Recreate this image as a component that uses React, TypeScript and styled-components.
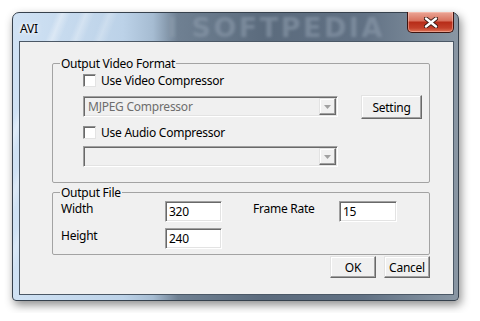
import React from "react";
import styled, { createGlobalStyle } from "styled-components";

const GlobalStyle = createGlobalStyle`
  html, body {
    margin: 0;
    background: #ffffff;
  }
  body {
    font-family: "Noto Sans", "DejaVu Sans", sans-serif;
    font-size: 12px;
    letter-spacing: -0.25px;
    color: #000000;
  }
`;

const Page = styled.div`
  padding: 12px;
`;

const Window = styled.div`
  width: 447px;
  height: 289px;
  box-sizing: border-box;
  display: flex;
  flex-direction: column;
  padding: 0 4px 5px 6px;
  border: 1px solid #36414d;
  border-radius: 7px 7px 4px 4px;
  box-shadow: 2px 4px 10px rgba(0, 0, 0, 0.45);
  background:
    linear-gradient(
        112deg,
        transparent 0 40px,
        rgba(255, 255, 255, 0.35) 46px,
        transparent 54px,
        transparent 62px,
        rgba(255, 255, 255, 0.28) 68px,
        transparent 76px,
        transparent 84px,
        rgba(255, 255, 255, 0.22) 90px,
        transparent 98px
      )
      no-repeat,
    linear-gradient(
      90deg,
      #d0e2f4 0px,
      #bcd2e8 110px,
      #a6bcd2 140px,
      #6f8092 165px,
      #5b6b7d 250px,
      #617184 350px,
      #7f8e9d 420px,
      #8a97a4 447px
    );
`;

const TitleBar = styled.div`
  position: relative;
  height: 28px;
  display: flex;
  align-items: flex-start;
  justify-content: space-between;
`;

const Title = styled.span`
  margin: 8px 0 0 1px;
  line-height: 15px;
  text-shadow: 0 0 5px #ffffff, 0 0 3px #ffffff;
`;

const Watermark = styled.span`
  position: absolute;
  left: 148px;
  top: -1px;
  font-family: "DejaVu Sans", sans-serif;
  font-weight: bold;
  font-size: 27px;
  letter-spacing: 2.5px;
  color: rgba(140, 155, 172, 0.6);
  filter: blur(1.4px);
`;

const CloseButton = styled.div`
  width: 47px;
  height: 21px;
  margin-top: -1px;
  box-sizing: border-box;
  display: flex;
  align-items: center;
  justify-content: center;
  border: 1px solid #3d1410;
  border-top: none;
  border-radius: 0 0 5px 5px;
  background: linear-gradient(#eba697 0%, #d8705c 45%, #b72c18 50%, #c3402a 80%, #de7458 100%);
  box-shadow: inset 0 0 0 1px rgba(255, 210, 200, 0.45);
`;

const Client = styled.div`
  flex: 1;
  display: flex;
  flex-direction: column;
  padding: 0 23px 0 32px;
  border: 1px solid #4b5866;
  background: #f0f0f0;
`;

const Group = styled.fieldset<{ $top: number; $bottom: number }>`
  margin: ${(p) => p.$top}px 0 0 0;
  padding: 0 0 ${(p) => p.$bottom}px 7px;
  border: 1px solid #a3a3a3;
  border-radius: 2px;
  min-inline-size: 0;
`;

const Legend = styled.legend`
  padding: 0 1px;
  line-height: 15px;
`;

const VideoBody = styled.div`
  margin-left: 23px;
  display: flex;
  flex-direction: column;
`;

const CheckRow = styled.label<{ $top: number }>`
  margin-top: ${(p) => p.$top}px;
  height: 13px;
  display: flex;
  align-items: center;
  gap: 5px;
  line-height: 15px;
`;

const CheckBox = styled.span`
  width: 13px;
  height: 13px;
  box-sizing: border-box;
  background: #ffffff;
  border: 1px solid;
  border-color: #8e8f8f #e3e3e3 #e3e3e3 #8e8f8f;
  box-shadow: inset 1px 1px 0 #696969;
`;

const ComboRow = styled.div<{ $top: number }>`
  margin-top: ${(p) => p.$top}px;
  height: 21px;
  display: flex;
  align-items: flex-start;
  gap: 23px;
`;

const Combo = styled.div`
  width: 255px;
  height: 21px;
  box-sizing: border-box;
  display: flex;
  align-items: center;
  justify-content: space-between;
  padding: 1px;
  border: 1px solid;
  border-color: #a0a0a0 #ffffff #ffffff #a0a0a0;
  box-shadow: inset 1px 1px 0 #696969, inset -1px -1px 0 #e3e3e3;
  background: #f0f0f0;
  color: #6d6d6d;
`;

const ComboText = styled.span`
  padding-left: 3px;
  line-height: 15px;
`;

const DropButton = styled.span`
  width: 17px;
  height: 17px;
  box-sizing: border-box;
  display: flex;
  align-items: center;
  justify-content: center;
  border: 1px solid;
  border-color: #e3e3e3 #696969 #696969 #e3e3e3;
  box-shadow: inset -1px -1px 0 #a0a0a0, inset 1px 1px 0 #ffffff;
  background: #f0f0f0;
`;

const Button = styled.div<{ $w: number; $h: number }>`
  width: ${(p) => p.$w}px;
  height: ${(p) => p.$h}px;
  flex-shrink: 0;
  box-sizing: border-box;
  display: flex;
  align-items: center;
  justify-content: center;
  border: 1px solid;
  border-color: #e3e3e3 #696969 #696969 #e3e3e3;
  box-shadow: inset -1px -1px 0 #a0a0a0, inset 1px 1px 0 #ffffff;
  background: #f0f0f0;
  line-height: 15px;
`;

const SettingButton = styled(Button)`
  margin-top: -1px;
`;

const FileGrid = styled.div`
  margin: 1px 0 0 1px;
  display: grid;
  grid-template-columns: 104px 57px 31px 86px 58px;
  grid-auto-rows: 21px;
  row-gap: 6px;
  align-items: start;
`;

const FieldLabel = styled.span<{ $col: number }>`
  grid-column: ${(p) => p.$col};
  line-height: 15px;
`;

const TextBox = styled.div<{ $col: number }>`
  grid-column: ${(p) => p.$col};
  height: 21px;
  box-sizing: border-box;
  display: flex;
  align-items: center;
  padding-left: 3px;
  border: 1px solid;
  border-color: #a0a0a0 #ffffff #ffffff #a0a0a0;
  box-shadow: inset 1px 1px 0 #696969, inset -1px -1px 0 #e3e3e3;
  background: #ffffff;
  line-height: 15px;
`;

const ButtonRow = styled.div`
  margin-top: 1px;
  display: flex;
  justify-content: flex-end;
  gap: 8px;
`;

function CloseGlyph() {
  return (
    <svg width="14" height="11" viewBox="0 0 14 11">
      <path
        d="M2 1.5 L12 9.5 M12 1.5 L2 9.5"
        stroke="#3a1a14"
        strokeWidth="4.2"
        strokeLinecap="round"
      />
      <path
        d="M2 1.5 L12 9.5 M12 1.5 L2 9.5"
        stroke="#ffffff"
        strokeWidth="2.4"
        strokeLinecap="round"
      />
    </svg>
  );
}

function Arrow() {
  return (
    <svg width="7" height="4" viewBox="0 0 7 4">
      <path d="M0 0 H7 L3.5 4 Z" fill="#a0a0a0" />
    </svg>
  );
}

export default function App() {
  return (
    <Page>
      <GlobalStyle />
      <Window>
        <TitleBar>
          <Title>AVI</Title>
          <Watermark>I SOFTPEDIA</Watermark>
          <CloseButton>
            <CloseGlyph />
          </CloseButton>
        </TitleBar>
        <Client>
          <Group $top={14} $bottom={15}>
            <Legend>Output Video Format</Legend>
            <VideoBody>
              <CheckRow $top={3}>
                <CheckBox />
                Use Video Compressor
              </CheckRow>
              <ComboRow $top={9}>
                <Combo>
                  <ComboText>MJPEG Compressor</ComboText>
                  <DropButton>
                    <Arrow />
                  </DropButton>
                </Combo>
                <SettingButton $w={61} $h={24}>
                  Setting
                </SettingButton>
              </ComboRow>
              <CheckRow $top={9}>
                <CheckBox />
                Use Audio Compressor
              </CheckRow>
              <ComboRow $top={7}>
                <Combo>
                  <ComboText />
                  <DropButton>
                    <Arrow />
                  </DropButton>
                </Combo>
              </ComboRow>
            </VideoBody>
          </Group>
          <Group $top={2} $bottom={5}>
            <Legend>Output File</Legend>
            <FileGrid>
              <FieldLabel $col={1}>Width</FieldLabel>
              <TextBox $col={2}>320</TextBox>
              <FieldLabel $col={4}>Frame Rate</FieldLabel>
              <TextBox $col={5}>15</TextBox>
              <FieldLabel $col={1}>Height</FieldLabel>
              <TextBox $col={2}>240</TextBox>
            </FileGrid>
          </Group>
          <ButtonRow>
            <Button $w={46} $h={22}>
              OK
            </Button>
            <Button $w={46} $h={22}>
              Cancel
            </Button>
          </ButtonRow>
        </Client>
      </Window>
    </Page>
  );
}
